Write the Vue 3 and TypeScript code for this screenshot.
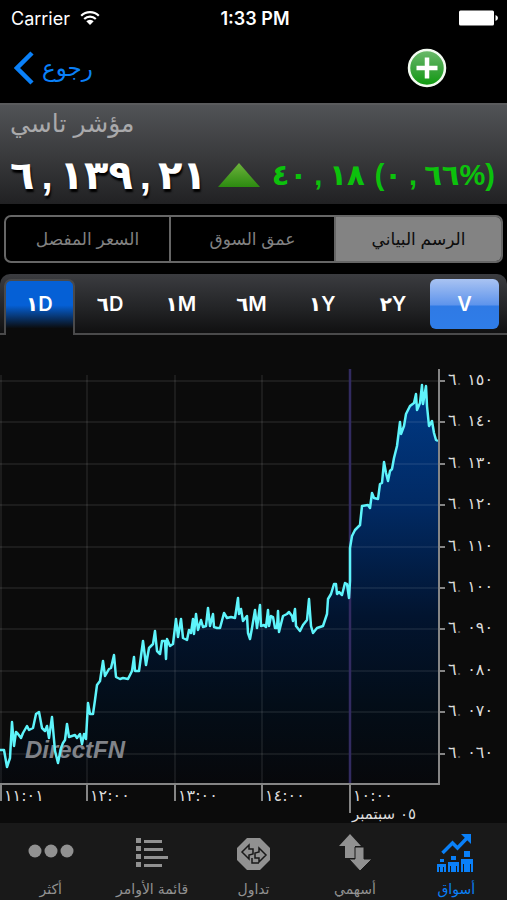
<script setup lang="ts">
import { ref } from 'vue'

type Point = [number, number]

const views = ['السعر المفصل', 'عمق السوق', 'الرسم البياني']
const activeView = ref(2)

const periods = ['١D', '٦D', '١M', '٦M', '١Y', '٢Y']
const activePeriod = ref(0)

const prices = ['١٥٠', '١٤٠', '١٣٠', '١٢٠', '١١٠', '١٠٠', '٠٩٠', '٠٨٠', '٠٧٠', '٠٦٠']
const priceLines = prices.map((label, i) => ({ label, y: Math.round(46 + i * 41.4) }))

const hours = [
  { label: '١١:٠١', x: 1 },
  { label: '١٢:٠٠', x: 87 },
  { label: '١٣:٠٠', x: 175 },
  { label: '١٤:٠٠', x: 262 },
]

// Index level through the session, in chart units.
const series: Point[] = [
  [0, 415], [4, 415], [7, 432], [10, 423], [12, 387], [14, 411], [16, 397], [18, 399], [21, 403], [23, 398], [27, 391],
  [29, 395], [33, 393], [36, 379], [39, 377], [42, 393], [45, 396], [47, 391], [49, 403], [52, 382], [55, 416],
  [58, 428], [61, 413], [63, 408], [65, 405], [67, 389], [69, 402], [75, 400], [77, 403], [80, 399], [82, 409],
  [84, 399], [86, 404], [88, 368], [90, 379], [93, 379], [95, 365], [97, 350], [100, 346], [103, 326], [105, 341],
  [109, 334], [111, 333], [114, 320], [116, 342], [120, 344], [123, 343], [128, 344], [132, 336], [134, 322],
  [135, 336], [139, 336], [143, 306], [146, 330], [149, 313], [153, 309], [155, 296], [157, 316], [160, 319],
  [162, 306], [165, 306], [166, 324], [167, 304], [170, 311], [173, 309], [176, 284], [178, 302], [181, 284],
  [183, 303], [187, 305], [189, 295], [191, 298], [193, 284], [194, 299], [196, 279], [198, 295], [201, 285],
  [203, 292], [206, 291], [208, 273], [210, 291], [213, 279], [214, 292], [217, 293], [220, 293], [224, 278],
  [227, 283], [231, 282], [235, 283], [238, 263], [239, 279], [241, 274], [243, 286], [247, 281], [248, 298],
  [250, 304], [252, 293], [255, 275], [257, 293], [260, 270], [261, 291], [264, 290], [266, 292], [268, 275],
  [269, 291], [271, 281], [273, 282], [275, 293], [277, 293], [278, 276], [279, 297], [283, 281], [287, 279],
  [289, 277], [292, 281], [293, 286], [295, 274], [296, 291], [300, 296], [303, 290], [307, 285], [309, 264],
  [311, 291], [313, 298], [317, 293], [323, 291], [327, 279], [328, 264], [331, 259], [334, 249], [336, 249],
  [337, 259], [339, 257], [342, 260], [345, 248], [347, 249], [349, 263], [350, 246], [350, 213], [352, 201],
  [355, 195], [360, 190], [362, 171], [368, 170], [370, 173], [372, 158], [374, 163], [378, 164], [380, 149],
  [382, 148], [384, 127], [386, 138], [388, 146], [390, 136], [392, 134], [394, 123], [397, 111], [400, 87],
  [401, 99], [404, 91], [406, 79], [410, 71], [414, 68], [416, 59], [417, 75], [420, 68], [422, 50], [423, 69],
  [426, 51], [427, 71], [429, 91], [432, 86], [434, 98], [436, 105], [438, 106],
]
const linePath = 'M' + series.map((p) => p.join(' ')).join('L')
const areaPath = `${linePath}L438 449L0 449Z`
</script>

<template>
  <div class="app">
    <header class="status">
      <span class="carrier">
        Carrier
        <svg class="wifi" viewBox="0 0 20 16" aria-hidden="true">
          <path d="M1.2 5.8a12.6 12.6 0 0 1 17.6 0M4.2 9a8.4 8.4 0 0 1 11.6 0" fill="none" stroke="#fff" stroke-width="2.2" />
          <path d="M10 15l-3.7-3.8a5.2 5.2 0 0 1 7.4 0z" fill="#fff" />
        </svg>
      </span>
      <span class="clock">1:33 PM</span>
      <svg class="battery" viewBox="0 0 40 16" aria-hidden="true">
        <rect x="0" y="0.5" width="35" height="15" rx="1.5" fill="#fff" />
        <path d="M36.5 5q2.500 1 2.500 3t-2.500 3z" fill="#fff" />
      </svg>
    </header>

    <nav class="topbar">
      <button class="back" type="button">
        <svg viewBox="0 0 20 34" aria-hidden="true"><path d="M18 2L3 17l15 15" fill="none" stroke="#0a80f8" stroke-width="4.500" /></svg>
        رجوع
      </button>
      <button class="add" type="button" aria-label="إضافة">
        <svg viewBox="0 0 40 40">
          <defs>
            <linearGradient id="addFill" x1="0" y1="0" x2="0" y2="1">
              <stop offset="0" stop-color="#6cbb6c" /><stop offset="0.5" stop-color="#3fa541" /><stop offset="1" stop-color="#0d9a0d" />
            </linearGradient>
          </defs>
          <circle cx="20" cy="20" r="18" fill="url(#addFill)" stroke="#f2fbf0" stroke-width="2.500" />
          <path d="M20 9.500v21M9.500 20h21" stroke="#fff" stroke-width="4.500" />
        </svg>
      </button>
    </nav>

    <section class="quote">
      <h1>مؤشر تاسي</h1>
      <div class="figures">
        <div class="price">٦<i>,</i>١٣٩<i>,</i>٢١</div>
        <svg class="up" viewBox="0 0 42 26" aria-hidden="true">
          <defs>
            <linearGradient id="upFill" x1="0" y1="0" x2="0" y2="1">
              <stop offset="0" stop-color="#6db33c" /><stop offset="1" stop-color="#2c8a10" />
            </linearGradient>
          </defs>
          <path d="M21 1L42 25H0z" fill="url(#upFill)" />
        </svg>
        <div class="change">٤٠<i>,</i>١٨ <b>(</b>٠<i>,</i>٦٦<b>%)</b></div>
      </div>
    </section>

    <div class="segments">
      <button v-for="(v, i) in views" :key="v" type="button" :class="{ on: i === activeView }" @click="activeView = i">{{ v }}</button>
    </div>

    <div class="periods">
      <button v-for="(p, i) in periods" :key="p" type="button" :class="{ on: i === activePeriod }" @click="activePeriod = i">{{ p }}</button>
      <button type="button" class="volume">V</button>
    </div>

    <svg class="chart" viewBox="0 0 507 488" role="img" aria-label="الرسم البياني">
      <defs>
        <linearGradient id="area" gradientUnits="userSpaceOnUse" x1="0" y1="50" x2="0" y2="449">
          <stop offset="0" stop-color="#003a86" />
          <stop offset="0.3" stop-color="#012a64" />
          <stop offset="0.58" stop-color="#02142f" />
          <stop offset="0.8" stop-color="#030d18" />
          <stop offset="1" stop-color="#07080b" />
        </linearGradient>
      </defs>
      <path :d="areaPath" fill="url(#area)" />
      <g class="grid">
        <path v-for="l in priceLines" :key="l.label" :d="`M0 ${l.y}H438`" />
        <path v-for="h in hours" :key="h.label" :d="`M${h.x} 40V449`" />
      </g>
      <path d="M350 34V449" stroke="#322b60" stroke-width="2.500" />
      <text class="mark" x="25" y="423">DirectFN</text>
      <path :d="linePath" class="line" />
      <path d="M439 34V450M0 449H440" class="axis" />
      <g v-for="l in priceLines" :key="l.label">
        <path :d="`M439 ${l.y}h6`" class="tick" />
        <text class="digits" x="448" :y="l.y + 4">٦<tspan class="dim">.</tspan></text>
        <text class="digits" x="493" :y="l.y + 4" text-anchor="end">{{ l.label }}</text>
      </g>
      <g v-for="h in hours" :key="h.label">
        <path :d="`M${h.x} 450v16`" class="tick" />
        <text class="digits" :x="h.x + 3" y="466">{{ h.label }}</text>
      </g>
      <path d="M350 450v28" class="tick" />
      <text class="digits" x="353" y="466">١٠:٠٠</text>
      <text class="date" x="352" y="484">٠٥ سبتمبر</text>
    </svg>

    <nav class="tabs">
      <a href="#more">
        <svg viewBox="0 0 46 40"><circle cx="7" cy="17" r="6.500" /><circle cx="23" cy="17" r="6.500" /><circle cx="39" cy="17" r="6.500" /></svg>
        <span>أكثر</span>
      </a>
      <a href="#orders">
        <svg viewBox="0 0 46 40">
          <path d="M7 4h5v5H7zM7 12h5v5H7zM7 20h5v5H7zM7 28h5v5H7zM15 6h18v3H15zM15 14h19v3H15zM15 22h24v3H15zM15 30h18v3H15z" />
        </svg>
        <span>قائمة الأوامر</span>
      </a>
      <a href="#trade">
        <svg viewBox="0 0 46 40">
          <path d="M17 4h13l10 10v12l-10 10H17L7 26V14z" />
          <path d="M23 20v-5h-4v-4l-7 7 7 7v-4zM25 19v5h4v4l7-7-7-7v4zM22 24v5h7" fill="#919191" stroke="#191919" stroke-width="1.500" />
        </svg>
        <span>تداول</span>
      </a>
      <a href="#stocks">
        <svg viewBox="0 0 46 40">
          <path d="M18 0l11 12h-6v12H13V12H7z" />
          <path d="M23 13h9v12h8L28 37 17 25h6z" stroke="#191919" stroke-width="1" />
        </svg>
        <span>أسهمي</span>
      </a>
      <a href="#markets" class="current">
        <svg viewBox="0 0 46 40">
          <path d="M9.500 19l10-10 5 5L35 3" fill="none" stroke="#0a80f8" stroke-width="3.500" />
          <path d="M28 0h10v10z" />
          <path d="M7 25h4v3H7zM18 22h5v4h-5zM31 17h6v6h-6z" />
          <path d="M4 30h9v8h-2v-5h-1v5H7v-5H6v5H4zM15 28h11v10h-2v-6h-1v6h-5v-6h-1v6h-2zM28 25h12v13h-2v-8h-1v8h-6v-8h-1v8h-2z" />
        </svg>
        <span>أسواق</span>
      </a>
    </nav>
  </div>
</template>

<style>
body {
  background: #0b0b0b;
}
</style>

<style scoped>
.app {
  min-height: 100vh;
  display: flex;
  flex-direction: column;
  background: #000;
  color: #fff;
  font-family: Inter, 'DejaVu Sans', sans-serif;
}
button {
  border: 0;
  padding: 0;
  margin: 0;
  background: none;
  color: inherit;
  font: inherit;
  cursor: pointer;
}
svg {
  display: block;
}
.status {
  display: grid;
  grid-template-columns: 1fr auto 1fr;
  align-items: center;
  height: 36px;
  padding: 0 8px 0 11px;
  font-size: 18px;
}
.carrier {
  display: flex;
  align-items: center;
  gap: 10px;
}
.wifi {
  width: 20px;
  height: 16px;
}
.clock {
  font-weight: 600;
}
.battery {
  width: 40px;
  height: 16px;
  justify-self: end;
}
.topbar {
  display: flex;
  align-items: center;
  justify-content: space-between;
  height: 64px;
  padding: 0 60px 3px 14px;
}
.back {
  display: flex;
  align-items: center;
  gap: 8px;
  color: #0a80f8;
  font-size: 23px;
}
.back svg {
  width: 20px;
  height: 34px;
}
.add svg {
  width: 40px;
  height: 40px;
}
.quote {
  height: 101px;
  padding: 0 12px 0 10px;
  box-sizing: border-box;
  border-top: 2px solid #5a5b5d;
  background: linear-gradient(#515356, #3a3b3d 50%, #212123);
}
h1 {
  margin: 0;
  font-size: 25px;
  line-height: 36px;
  font-weight: 400;
  color: #a9a9ab;
  text-align: left;
}
.figures {
  display: flex;
  align-items: center;
  justify-content: space-between;
  height: 68px;
}
.price,
.change {
  direction: ltr;
  unicode-bidi: bidi-override;
  font-family: 'DejaVu Sans', sans-serif;
  font-weight: 700;
  white-space: nowrap;
}
.price {
  font-size: 40px;
  text-shadow: 1px 3px 2px #000;
}
.price i,
.change i {
  font-family: 'Liberation Sans', sans-serif;
  font-style: normal;
  margin: 0 7px;
}
.change b {
  font-family: 'Liberation Sans', sans-serif;
}
.up {
  width: 42px;
  height: 26px;
}
.change {
  font-size: 29px;
  color: #0cc20c;
}
.segments {
  display: grid;
  grid-template-columns: repeat(3, 1fr);
  height: 48px;
  margin: 11px 4px;
  box-sizing: border-box;
  border: 2px solid #666;
  border-radius: 7px;
  overflow: hidden;
  font-size: 17px;
  color: #828282;
}
.segments button:not(:last-child) {
  border-right: 2px solid #666;
}
.segments .on {
  background: #838383;
  color: #0c0c0c;
}
.periods {
  display: grid;
  grid-template-columns: repeat(7, 1fr);
  height: 61px;
  box-sizing: border-box;
  padding: 5px 8px 0 4px;
  border-bottom: 2px solid #4a4a4b;
  border-radius: 10px 10px 0 0;
  background: linear-gradient(#3b3c40, #222325 60%, #101011);
  font-size: 20px;
  font-weight: 600;
}
.periods button {
  padding-bottom: 4px;
}
.periods .on {
  margin-bottom: -2px;
  padding-bottom: 8px;
  border: 2px solid #4a4a4b;
  border-bottom: 0;
  border-radius: 7px 7px 0 0;
  background: linear-gradient(#0560d6 45%, #0b0b0b 88%);
}
.periods .volume {
  height: 50px;
  margin-left: 2px;
  padding-bottom: 0;
  border-radius: 6px;
  background: linear-gradient(#a9c3f2, #5e94ec 52%, #2f7ae5 54%, #2f7de9);
}
.chart {
  width: 100%;
  height: auto;
  background: #0b0b0b;
}
.grid path {
  stroke: #fff;
  stroke-opacity: 0.07;
  stroke-width: 2;
}
.line {
  fill: none;
  stroke: #5ef4fb;
  stroke-width: 2.5;
  stroke-linejoin: round;
}
.axis {
  fill: none;
  stroke: #858585;
  stroke-width: 2;
}
.tick {
  stroke: #858585;
  stroke-width: 2;
}
.mark {
  font: italic bold 24px 'Liberation Sans', sans-serif;
  fill: #808389;
}
.digits,
.date {
  font-family: 'DejaVu Sans', sans-serif;
  font-size: 16px;
  fill: #ddd;
}
.date {
  font-size: 15px;
}
.dim {
  fill: #555;
}
.tabs {
  flex: 1;
  display: grid;
  grid-template-columns: repeat(5, 1fr);
  background: #191919;
  color: #919191;
  font-size: 14px;
}
.tabs a {
  display: flex;
  flex-direction: column;
  align-items: center;
  padding-top: 11px;
  gap: 5px;
  color: inherit;
  text-decoration: none;
}
.tabs svg {
  width: 46px;
  height: 40px;
  fill: currentColor;
}
.tabs span {
  line-height: 20px;
}
.tabs .current {
  color: #0a80f8;
}
</style>
